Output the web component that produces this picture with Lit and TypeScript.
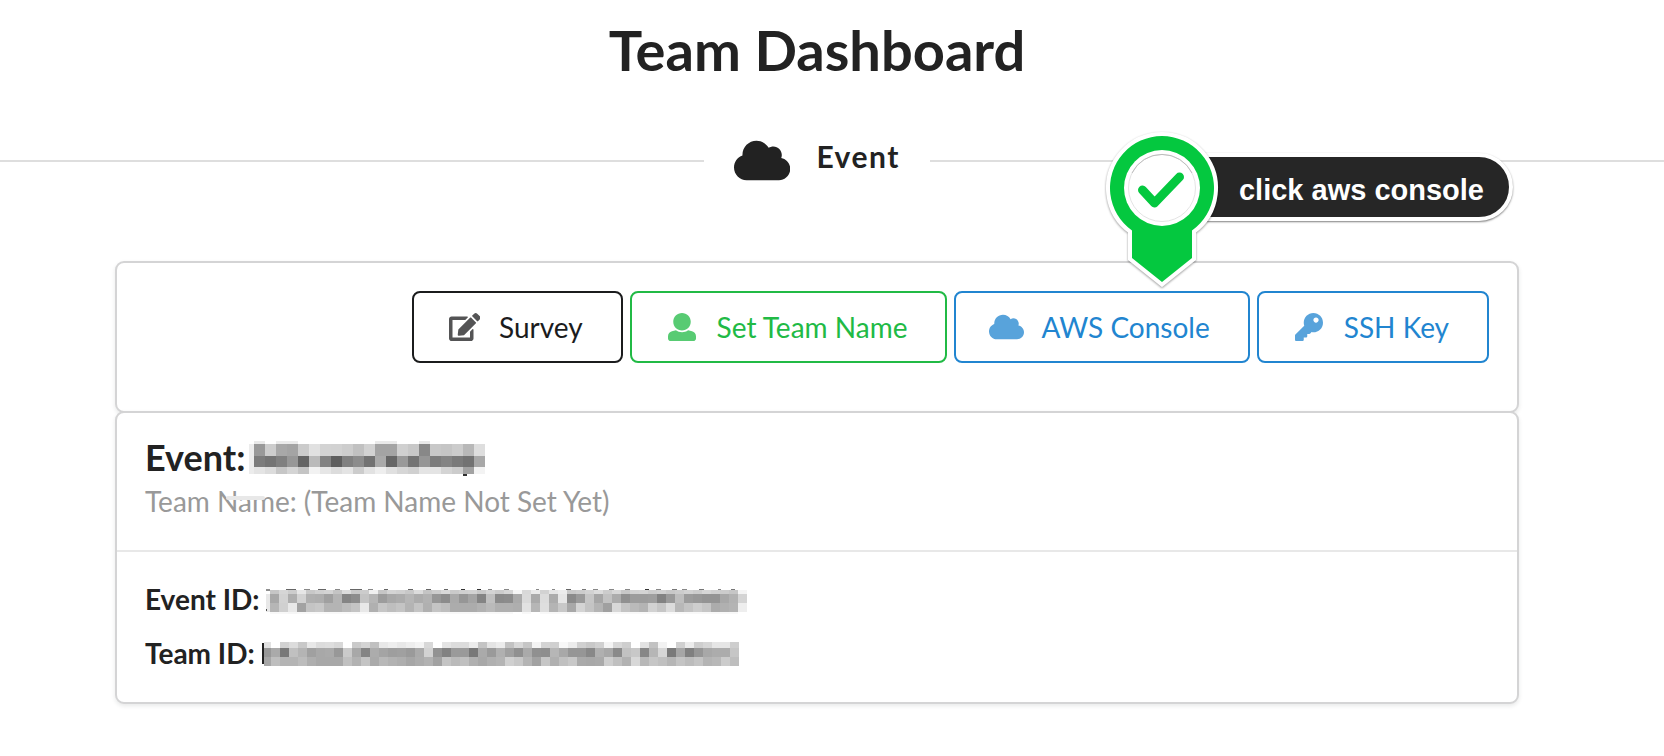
import { LitElement, html, css, svg } from "lit";
import { customElement, property } from "lit/decorators.js";

const ICONS: Record<string, { width: number; path: string }> = {
  cloud: {
    width: 640,
    path: "M537.6 226.6c4.1-10.7 6.4-22.4 6.4-34.6 0-53-43-96-96-96-19.7 0-38.1 6-53.3 16.2C367 64.2 315.3 32 256 32c-88.4 0-160 71.6-160 160 0 2.7.1 5.4.2 8.1C40.2 219.8 0 273.2 0 336c0 79.5 64.5 144 144 144h368c70.7 0 128-57.3 128-128 0-61.9-44-113.6-102.4-125.4z",
  },
  edit: {
    width: 576,
    path: "M402.6 83.2l90.2 90.2c3.8 3.8 3.8 10 0 13.8L274.4 405.6l-92.8 10.3c-12.4 1.4-22.9-9.1-21.5-21.5l10.3-92.8L388.8 83.2c3.8-3.8 10-3.8 13.8 0zm162-22.9l-48.8-48.8c-15.2-15.2-39.9-15.2-55.2 0l-35.4 35.4c-3.8 3.8-3.8 10 0 13.8l90.2 90.2c3.8 3.8 10 3.8 13.8 0l35.4-35.4c15.2-15.3 15.2-40 0-55.2zM384 346.2V448H64V128h229.8c3.2 0 6.2-1.3 8.5-3.5l40-40c7.6-7.6 2.2-20.5-8.5-20.5H48C21.5 64 0 85.5 0 112v352c0 26.5 21.5 48 48 48h352c26.5 0 48-21.5 48-48V306.2c0-10.7-12.9-16-20.5-8.5l-40 40c-2.2 2.3-3.5 5.3-3.5 8.5z",
  },
  user: {
    width: 512,
    path: "M256 0c88.366 0 160 71.634 160 160s-71.634 160-160 160S96 248.366 96 160 167.634 0 256 0zm183.283 333.821l-71.313-17.828c-74.923 53.89-165.738 41.864-223.94 0l-71.313 17.828C29.981 344.505 0 382.903 0 426.955V464c0 26.51 21.49 48 48 48h416c26.51 0 48-21.49 48-48v-37.045c0-44.052-29.981-82.45-72.717-93.134z",
  },
  key: {
    width: 512,
    path: "M512 176.001C512 273.203 433.202 352 336 352c-11.22 0-22.19-1.062-32.827-3.069l-24.012 27.014A23.999 23.999 0 0 1 261.223 384H224v40c0 13.255-10.745 24-24 24h-40v40c0 13.255-10.745 24-24 24H24c-13.255 0-24-10.745-24-24v-78.059c0-6.365 2.529-12.47 7.029-16.971l161.802-161.802C163.108 213.814 160 195.271 160 176 160 78.798 238.797.001 335.999 0 433.488-.001 512 78.511 512 176.001zM336 128c0 26.51 21.49 48 48 48s48-21.49 48-48-21.49-48-48-48-48 21.49-48 48z",
  },
};

@customElement("ui-icon")
class UiIcon extends LitElement {
  @property() name = "cloud";

  static styles = css`
    :host {
      display: inline-flex;
      justify-content: center;
      height: 28px;
    }
    .glyph {
      flex: none;
      height: 100%;
      fill: currentColor;
    }
  `;

  render() {
    const icon = ICONS[this.name];
    return html`<svg class="glyph" viewBox="0 0 ${icon.width} 512" aria-hidden="true">
      <path d=${icon.path}></path>
    </svg>`;
  }
}

/* A band of grey cells: y, height, left edge of the first cell, two hex digits of grey per cell. */
interface Band {
  y: number;
  h: number;
  x: number;
  greys: string;
}

interface MosaicData {
  cell: number;
  width: number;
  height: number;
  bands: Band[];
  marks: number[][];
}

const EVENT_NAME: MosaicData = {
  cell: 11,
  width: 237,
  height: 48,
  bands: [
    { y: 8, h: 3, x: 5, greys: "e9 ff eb eb ff ff ff ff ff ff ff ea ea ff ff e9 ff ff ff ff ff" },
    { y: 11, h: 12, x: 5, greys: "99 cd a8 a4 cb e1 d3 d2 cd c1 d2 a4 a4 d0 c8 88 c8 c5 cc b8 de" },
    { y: 23, h: 11, x: 5, greys: "7c 74 80 97 64 ba 82 5e 80 8c 72 aa 66 99 74 96 7c 84 7a 72 a8" },
    { y: 34, h: 7, x: 5, greys: "e4 dc c6 d4 c4 f2 e6 dc e4 cc e2 ee e0 d6 d0 e4 e4 d4 cc a2 f3" },
  ],
  marks: [[0, 11, 5, 30, 0xec], [214, 41, 4, 2, 0x30]],
};

const EVENT_ID: MosaicData = {
  cell: 9,
  width: 481,
  height: 40,
  bands: [
    { y: 11, h: 4, x: 4, greys: "c6 d6 cc e6 c8 d0 d4 c4 dc c8 cc f0 c6 d4 d0 c8 dc c4 cc d8 ca d0 d2 c8 d4 cc d6 f6 d8 ea d2 e6 ec c8 cc d2 dc cc d8 c8 d2 d4 cc d0 c8 cc d2 cc d6 d0 cc c6 f4" },
    { y: 15, h: 9, x: 4, greys: "a8 d2 ae d2 b0 ae a0 b4 84 8c c4 b6 9c a8 ac b6 ac b2 96 8c aa 96 a4 84 c0 8a 8c aa da aa dc ac e6 8a 9a c6 a6 c2 ac 90 9c 9c 9e 82 9a be 9c 98 94 94 a8 b2 d4" },
    { y: 24, h: 9, x: 4, greys: "b6 d0 e8 a2 c4 c8 b4 b4 bc c4 e8 b0 c6 be c4 b4 c4 b0 c4 be ac ac ac b2 ba b0 b0 ae e2 b6 de b4 c8 a8 d4 c4 b4 a0 d8 c4 ba b4 d2 c6 dc b8 c4 ce c6 ac b0 b4 ee" },
    { y: 33, h: 2, x: 4, greys: "f8 f8 f6 f8 f8 f8 f8 f8 f8 f8 f8 f8 f8 f8 f8 f8 f8 f8 f8 f8 f8 f8 f8 f8 f8 f8 f8 ff f8 ff f8 f8 f8 f8 f8 f8 f8 f8 f8 f8 f8 f8 f8 f8 f8 f8 f8 f8 f8 f8 f8 f8 ff" },
  ],
  marks: [
    [0, 10, 4, 2, 0x90], [0, 15, 4, 18, 0xe8], [0, 30, 1, 2, 0x50],
    [20, 10, 10, 1, 0x66], [38, 10, 6, 1, 0x88], [52, 10, 8, 1, 0x66], [69, 10, 5, 1, 0x88],
    [84, 10, 12, 1, 0x66], [102, 10, 5, 1, 0x88], [118, 10, 4, 1, 0x66], [142, 10, 5, 1, 0x66],
    [160, 10, 5, 1, 0x66], [178, 10, 4, 1, 0x66], [195, 10, 4, 1, 0x33], [211, 10, 4, 1, 0x33],
    [222, 10, 4, 1, 0x88], [238, 10, 5, 1, 0x88], [270, 10, 3, 1, 0x88], [286, 10, 3, 1, 0x88],
    [300, 10, 5, 1, 0x66], [316, 10, 4, 1, 0x77], [327, 10, 5, 1, 0x88], [343, 10, 5, 1, 0x88],
    [359, 10, 5, 1, 0x88], [379, 10, 4, 1, 0x33], [390, 10, 5, 1, 0x88], [406, 10, 5, 1, 0x77],
    [416, 10, 5, 1, 0x88], [433, 10, 5, 1, 0x77], [452, 10, 3, 1, 0x88], [465, 10, 4, 1, 0x77],
  ],
};

const TEAM_ID: MosaicData = {
  cell: 9,
  width: 480,
  height: 40,
  bands: [
    { y: 9, h: 6, x: 10, greys: "ff d2 dc c8 e8 dc de d8 ff ca d4 c0 e8 ee e8 ee f4 d8 ff e4 dc dc ec c4 e4 ec c2 d8 c6 f4 d4 d0 f8 ec d0 c8 d0 f4 d8 ce ff e2 c2 f2 ff d0 ec ce d6 e6 e6 ce" },
    { y: 15, h: 9, x: 10, greys: "aa 78 c0 b4 a0 a8 aa 98 ca a8 84 ac a4 9e a0 9a aa d2 92 82 9a 9a 78 aa 9a b0 a0 90 aa 90 8e b6 a8 96 96 88 b0 a8 8a c2 c8 86 b6 d6 7a a6 80 96 a8 ac ac c6" },
    { y: 24, h: 9, x: 10, greys: "be b4 b4 bc ae a8 a8 a8 c0 b2 c4 aa b8 b2 ae a6 ac b2 a2 c4 ba c0 b0 a8 b0 b4 d0 c8 b4 a2 c6 b0 c0 c8 aa a8 aa ce c0 b2 d8 b8 c6 c0 b6 c4 bc c4 b4 b8 cc be" },
  ],
  marks: [[1, 10, 2, 21, 0x22], [3, 9, 7, 6, 0xe2], [3, 15, 7, 9, 0x98], [3, 24, 7, 9, 0xa6]],
};

@customElement("redacted-text")
class RedactedText extends LitElement {
  @property({ attribute: false }) data: MosaicData = EVENT_NAME;

  static styles = css`
    :host {
      display: block;
    }
    .mosaic {
      display: block;
      shape-rendering: crispEdges;
    }
  `;

  render() {
    const { cell, width, height, bands, marks } = this.data;
    return html`<svg class="mosaic" width=${width} height=${height} role="img" aria-label="Redacted">
      ${bands.map((b) =>
        b.greys.split(" ").map(
          (g, i) => svg`<rect x=${b.x + i * cell} y=${b.y} width=${cell} height=${b.h} fill="#${g}${g}${g}"></rect>`
        )
      )}
      ${marks.map(
        ([x, y, w, h, g]) => svg`<rect x=${x} y=${y} width=${w} height=${h} fill="rgb(${g},${g},${g})"></rect>`
      )}
    </svg>`;
  }
}

@customElement("map-callout")
class MapCallout extends LitElement {
  static styles = css`
    :host {
      display: flex;
      align-items: flex-start;
      font-family: "Liberation Sans", Arial, sans-serif;
    }
    .pin {
      flex: none;
      position: relative;
      z-index: 1;
      filter: drop-shadow(0 1px 1px rgba(0, 0, 0, 0.4));
    }
    .label {
      box-sizing: border-box;
      height: 68px;
      margin: 22px 0 0 -40px;
      padding: 2px 25px 0 56px;
      border: 4px solid #fff;
      border-radius: 0 34px 34px 0;
      background: #262626;
      color: #fff;
      font-size: 29px;
      font-weight: bold;
      line-height: 62px;
      white-space: nowrap;
      box-shadow: 0 1px 2px rgba(0, 0, 0, 0.5);
    }
  `;

  render() {
    return html`
      <svg class="pin" width="114" height="156" viewBox="0 0 114 156" aria-hidden="true">
        <path
          d="M27 99.500A52 52 0 1 1 87 99.500V127L57 151L27 127Z"
          fill="#04c83f" stroke="#fff" stroke-width="8" stroke-linejoin="miter" paint-order="stroke"
        ></path>
        <circle cx="57" cy="57" r="38" fill="#fff"></circle>
        <circle cx="57" cy="57" r="33.500" fill="none" stroke="#e4e4e4" stroke-width="1"></circle>
        <path d="M27 42A33.500 33.500 0 0 1 87 42" fill="none" stroke="#bdbdbd" stroke-width="1"></path>
        <path d="M37.500 59L49.500 72L74.500 46" fill="none" stroke="#04c83f" stroke-width="9"
          stroke-linecap="round" stroke-linejoin="round"></path>
      </svg>
      <span class="label">click aws console</span>
    `;
  }
}

@customElement("app-root")
class AppRoot extends LitElement {
  static styles = css`
    :host {
      display: block;
      min-height: 100vh;
      box-sizing: border-box;
      padding: 14px 30px 52px 0;
      overflow-x: hidden;
      background: #fff;
      color: #222;
      font-family: Lato, "Helvetica Neue", Arial, sans-serif;
      font-size: 28px;
      line-height: 40px;
    }
    h1,
    h2,
    h3,
    p {
      margin: 0;
    }
    .title {
      font-size: 56px;
      line-height: 72px;
      font-weight: 700;
      text-align: center;
    }
    .divider {
      display: flex;
      align-items: center;
      height: 48px;
      margin-top: 51px;
    }
    .rule {
      flex: 1;
    }
    .rule::before {
      content: "";
      display: block;
      height: 2px;
      background: #dedede;
    }
    .rule.end::before {
      margin-right: -30px;
    }
    .section {
      display: flex;
      align-items: center;
      gap: 26px;
      padding: 0 30px 2px;
      font-size: 30px;
      line-height: 40px;
      font-weight: 700;
      letter-spacing: 0.05em;
    }
    .section ui-icon {
      height: 45px;
    }
    .section-name {
      padding-bottom: 8px;
    }
    .cards {
      position: relative;
      margin: 76px 115px 0;
    }
    .card {
      border: 2px solid #d4d4d5;
      border-radius: 9px;
      background: #fff;
      box-shadow: 0 2px 4px rgba(34, 36, 38, 0.1);
    }
    .card + .card {
      position: relative;
      margin-top: -2px;
    }
    .toolbar {
      display: flex;
      justify-content: flex-end;
      gap: 7px;
      padding: 28px 28px 48px;
    }
    .button {
      display: flex;
      align-items: center;
      gap: 18px;
      padding: 20px 38px 20px 34px;
      border: 2px solid currentColor;
      border-radius: 8px;
      background: transparent;
      color: #1b1c1d;
      font: inherit;
      line-height: 28px;
      white-space: nowrap;
      cursor: pointer;
    }
    .button ui-icon {
      width: 33px;
      opacity: 0.75;
    }
    .green {
      color: #21ba45;
    }
    .blue {
      color: #2185d0;
    }
    .summary {
      padding: 20px 28px 29px;
    }
    .summary h3 {
      display: flex;
      gap: 4px;
      font-size: 36px;
      line-height: 48px;
      font-weight: 700;
    }
    .meta {
      position: relative;
      color: #999;
    }
    .smudge {
      position: absolute;
      left: 81px;
      top: 15px;
      width: 39px;
      height: 4px;
      border-radius: 2px;
      background: #e8e8e8;
    }
    .ids {
      display: grid;
      gap: 14px;
      padding: 27px 28px 29px;
      border-top: 2px solid #e8e8e8;
    }
    .ids p {
      display: flex;
      gap: 6px;
      font-weight: 700;
    }
    map-callout {
      position: absolute;
      top: -130px;
      right: 6px;
      z-index: 2;
    }
  `;

  render() {
    return html`
      <h1 class="title">Team Dashboard</h1>
      <div class="divider">
        <span class="rule"></span>
        <h2 class="section">
          <ui-icon name="cloud"></ui-icon>
          <span class="section-name">Event</span>
        </h2>
        <span class="rule end"></span>
      </div>
      <main class="cards">
        <section class="card toolbar">
          <button class="button" type="button"><ui-icon name="edit"></ui-icon>Survey</button>
          <button class="button green" type="button"><ui-icon name="user"></ui-icon>Set Team Name</button>
          <button class="button blue" type="button"><ui-icon name="cloud"></ui-icon>AWS Console</button>
          <button class="button blue" type="button"><ui-icon name="key"></ui-icon>SSH Key</button>
        </section>
        <section class="card">
          <div class="summary">
            <h3>Event:<redacted-text .data=${EVENT_NAME}></redacted-text></h3>
            <p class="meta">Team Name: (Team Name Not Set Yet)<span class="smudge"></span></p>
          </div>
          <div class="ids">
            <p>Event ID:<redacted-text .data=${EVENT_ID}></redacted-text></p>
            <p>Team ID:<redacted-text .data=${TEAM_ID}></redacted-text></p>
          </div>
        </section>
        <map-callout></map-callout>
      </main>
    `;
  }
}
